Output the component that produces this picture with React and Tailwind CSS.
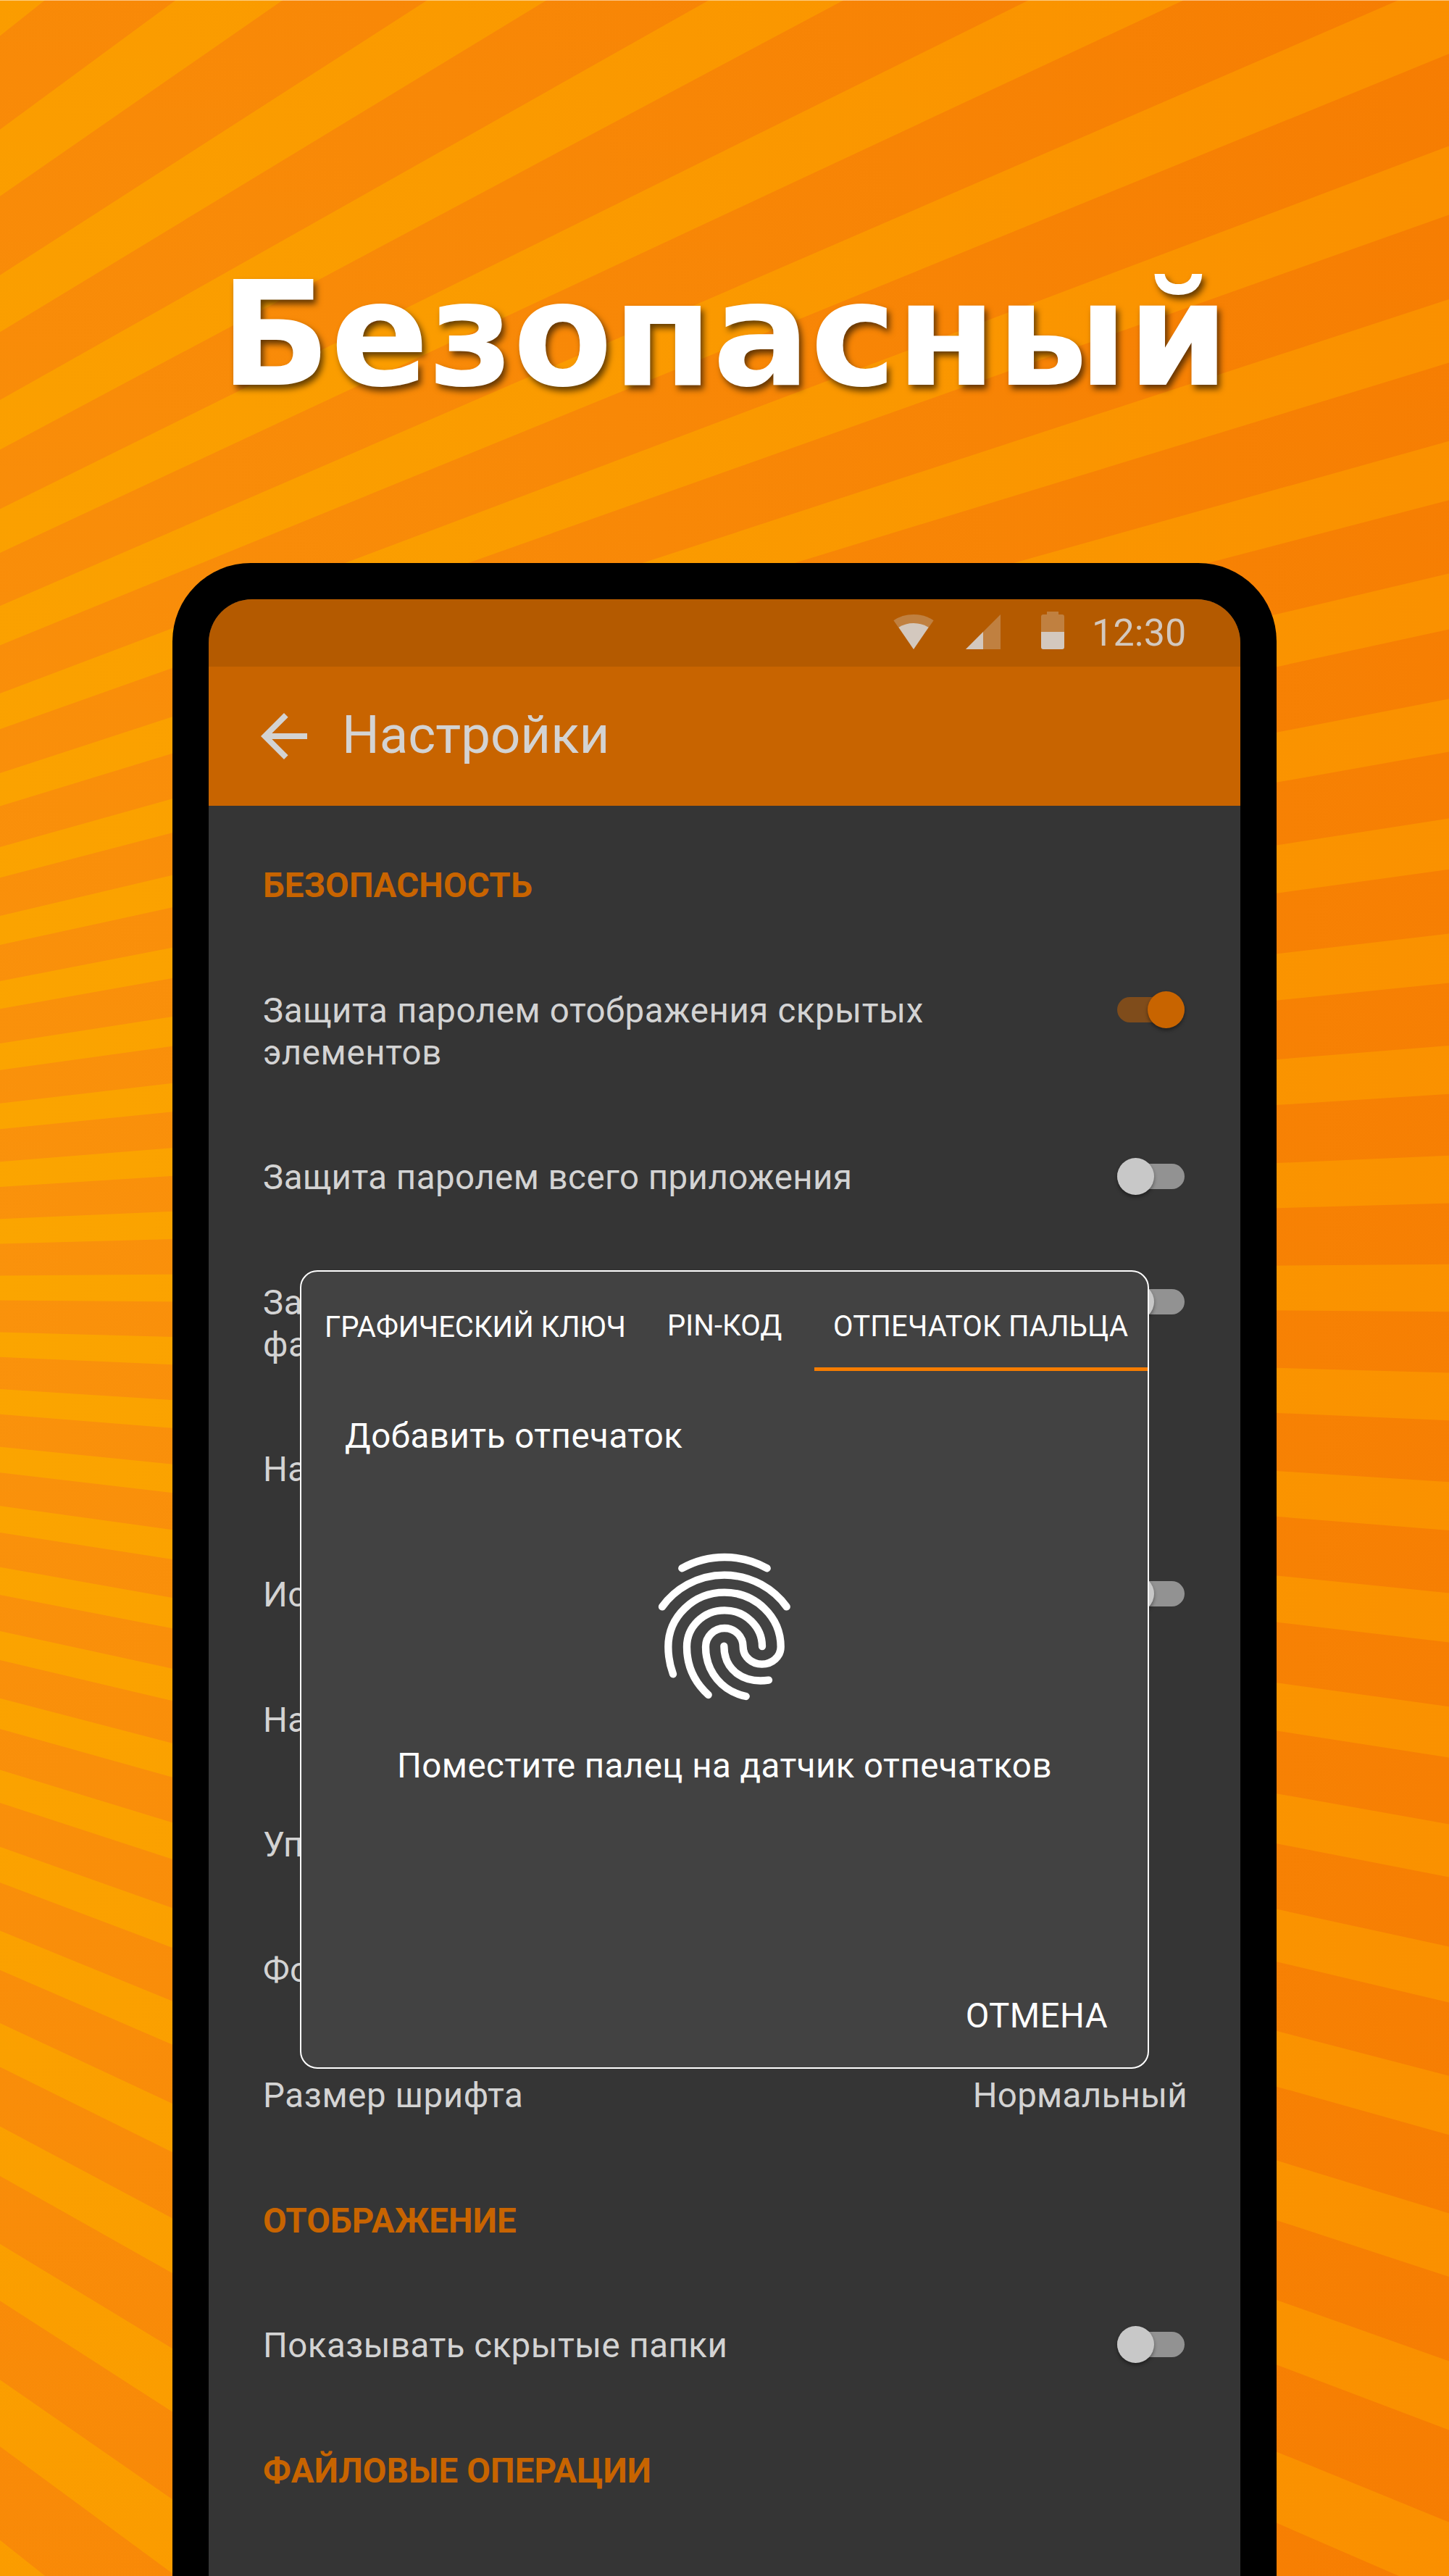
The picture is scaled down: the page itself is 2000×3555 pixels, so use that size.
import React from "react";

const RAY_STEP = Math.PI / 48;
const RAY_HALF = RAY_STEP * 0.219;

function rayPath() {
  const yAt = (x, a) => (1777.5 + (x + 2173) * 0.548 * Math.tan(a)).toFixed(1);
  const parts = [];
  for (let n = -17; n <= 17; n++) {
    const a = n * RAY_STEP - RAY_HALF;
    const b = n * RAY_STEP + RAY_HALF;
    parts.push(`M0 ${yAt(0, a)}L2000 ${yAt(2000, a)}L2000 ${yAt(2000, b)}L0 ${yAt(0, b)}Z`);
  }
  return parts.join("");
}

function Rays() {
  return (
    <svg className="absolute inset-0" width="2000" height="3555" viewBox="0 0 2000 3555" aria-hidden="true">
      <defs>
        <radialGradient id="base" cx="-0.05" cy="0.5" r="1.17">
          <stop offset="0" stopColor="#fa930c" />
          <stop offset="1" stopColor="#f67d02" />
        </radialGradient>
        <radialGradient id="ray" gradientUnits="userSpaceOnUse" cx="0" cy="0" r="1" gradientTransform="translate(-100 1777.5) scale(2340 4159)">
          <stop offset="0" stopColor="#fba600" />
          <stop offset="1" stopColor="#fa8f00" />
        </radialGradient>
      </defs>
      <rect width="2000" height="3555" fill="url(#base)" />
      <path d={rayPath()} fill="url(#ray)" />
      <rect width="2000" height="1" fill="#fff" opacity="0.5" />
    </svg>
  );
}

function WifiIcon() {
  return (
    <svg className="h-[56px] w-[60px]" viewBox="0 0 60 56">
      <path d="M30 52L2.4 12.3Q14 4 30 4T57.6 12.3Z" fill="#c08040" />
      <path d="M30 52L9.4 21.7Q19 16 30 16T50.6 21.7Z" fill="#d3c8be" />
    </svg>
  );
}

function SignalIcon() {
  return (
    <svg className="h-[48px] w-[48px]" viewBox="0 0 48 48">
      <path d="M48 0V48H0Z" fill="#c08040" />
      <path d="M24 24V48H0Z" fill="#d3c8be" />
    </svg>
  );
}

function BatteryIcon() {
  return (
    <svg className="h-[52px] w-[32px]" viewBox="0 0 32 52">
      <path d="M8 0H24V4H29Q32 4 32 7V28H0V7Q0 4 3 4H8Z" fill="#c08040" />
      <path d="M0 28H32V49Q32 52 29 52H3Q0 52 0 49Z" fill="#d3c8be" />
    </svg>
  );
}

function StatusBar() {
  return (
    <div className="flex h-[93px] shrink-0 items-start bg-[#b45a00]">
      <div className="mt-[17px] ml-[943px] flex items-start">
        <WifiIcon />
        <div className="mt-[4px] ml-[42px]"><SignalIcon /></div>
        <div className="ml-[56px]"><BatteryIcon /></div>
      </div>
      <span className="mt-[16px] ml-[38px] text-[52px] leading-[61px] tracking-[0.2px] text-[#d3c8be]">12:30</span>
    </div>
  );
}

function AppBar() {
  return (
    <div className="flex h-[192px] shrink-0 items-center bg-[#c86400] pl-[56px]">
      <svg className="size-[96px]" viewBox="0 0 24 24" fill="#d3d3d3">
        <path d="M20 11H7.83l5.59-5.59L12 4l-8 8 8 8 1.41-1.41L7.83 13H20v-2z" />
      </svg>
      <span className="mb-[2px] ml-[32px] text-[72.6px] leading-[86px] text-[#d3d3d3]">Настройки</span>
    </div>
  );
}

function Toggle({ on }) {
  return (
    <span className="relative mt-[1px] mr-[2px] flex h-[51px] w-[93px] shrink-0 items-center">
      <span className={on ? "h-[35px] w-full rounded-full bg-[#7f4c1b]" : "h-[35px] w-full rounded-full bg-[#929292]"} />
      <span
        className={
          on
            ? "absolute top-0 right-0 size-[51px] rounded-full bg-[#c86400] shadow-[0_3px_5px_rgba(0,0,0,0.4)]"
            : "absolute top-0 left-0 size-[51px] rounded-full bg-[#c8c8c8] shadow-[0_3px_5px_rgba(0,0,0,0.4)]"
        }
      />
    </span>
  );
}

function Section({ children }) {
  return (
    <h2 className="py-[57.55px] text-[47.46px] leading-[57.6px] font-bold tracking-[0.12px] text-[#c86400]">{children}</h2>
  );
}

function Row({ label, toggle, value, tracking = "tracking-[0.45px]" }) {
  return (
    <div className="flex items-start justify-between py-[57.55px] text-[47.46px] leading-[57.6px] text-[#d3d3d3]">
      <span className={`whitespace-pre-line ${tracking}`}>{label}</span>
      {toggle && <Toggle on={toggle === "on"} />}
      {value && <span className="-mr-[2px] tracking-[0.3px]">{value}</span>}
    </div>
  );
}

function Fingerprint() {
  return (
    <svg
      className="mx-auto size-[280px]"
      viewBox="0 0 840 840"
      fill="none"
      stroke="#fff"
      strokeWidth="31"
      strokeLinecap="round"
    >
      <path d="M244 190A360 360 0 0 1 596 190" />
      <path d="M162 349A318.6 318.6 0 0 1 677 349" />
      <path d="M207 628C193 590 187 555 187 515C187 391 291 290 420 290S653 391 653 515A78 72 0 0 1 497 515C497 472 463 438 420 438S342 472 342 515C342 620 412 700 509 720" />
      <path d="M576 513C576 431 506 364 420 364S264 431 264 515C264 595 296 662 353 714" />
      <path d="M418 512C418 608 495 668 603 653" />
    </svg>
  );
}

function Dialog() {
  return (
    <div className="absolute top-[926px] left-[126px] flex h-[1102px] w-[1172px] flex-col overflow-hidden rounded-[24px] border-2 border-white bg-[#424242] text-white">
      <div className="flex h-[137px] shrink-0 text-[40px] leading-[48px] whitespace-nowrap">
        <span className="mt-[53px] ml-[32px] w-[473px]">ГРАФИЧЕСКИЙ КЛЮЧ</span>
        <span className="mt-[51px] w-[203px] tracking-[0.1px]">PIN-КОД</span>
        <span className="grow border-b-[5px] border-[#f57c00] pt-[52px] pl-[26px] tracking-[0.2px]">ОТПЕЧАТОК ПАЛЬЦА</span>
      </div>
      <h3 className="mt-[62px] ml-[60px] text-[47.46px] leading-[57.6px] tracking-[0.5px]">Добавить отпечаток</h3>
      <div className="mt-[89px] flex">
        <Fingerprint />
      </div>
      <p className="mt-[28px] text-center text-[47.46px] leading-[57.6px] tracking-[0.45px]">Поместите палец на датчик отпечатков</p>
      <button className="mt-auto mr-[55px] mb-[41px] self-end text-[47.46px] leading-[57.6px] tracking-[0.4px]">ОТМЕНА</button>
    </div>
  );
}

export default function App() {
  return (
    <div
      className="relative flex h-[3555px] w-[2000px] flex-col items-center overflow-hidden"
      style={{ fontFamily: "Roboto, sans-serif" }}
    >
      <Rays />
      <h1
        className="relative flex h-[777px] shrink-0 items-start pt-[345px] text-[200px] leading-[233px] font-bold text-white [text-shadow:4px_6px_8px_rgba(0,0,0,0.6)]"
        style={{ fontFamily: "'DejaVu Sans', sans-serif" }}
      >
        Безопасный
      </h1>
      <div className="relative flex h-[2778px] w-[1524px] shrink-0 flex-col rounded-t-[108px] bg-black px-[50px] pt-[50px]">
        <div className="relative flex grow flex-col overflow-hidden rounded-t-[60px] bg-[#353535]">
          <StatusBar />
          <AppBar />
          <div className="px-[75px] pt-[24.9px]">
            <Section>БЕЗОПАСНОСТЬ</Section>
            <Row label={"Защита паролем отображения скрытых\nэлементов"} toggle="on" tracking="tracking-[0.6px]" />
            <Row label="Защита паролем всего приложения" toggle="off" />
            <Row label={"Защита паролем удаления\nфайлов"} toggle="off" />
            <Row label="Настройка цветов" />
            <Row label="Использовать английский язык" toggle="off" />
            <Row label="Настройка виджета" />
            <Row label="Управление папками" />
            <Row label="Формат даты и времени" />
            <Row label="Размер шрифта" value="Нормальный" tracking="tracking-[0.6px]" />
            <Section>ОТОБРАЖЕНИЕ</Section>
            <Row label="Показывать скрытые папки" toggle="off" />
            <Section>ФАЙЛОВЫЕ ОПЕРАЦИИ</Section>
          </div>
          <Dialog />
        </div>
      </div>
    </div>
  );
}
